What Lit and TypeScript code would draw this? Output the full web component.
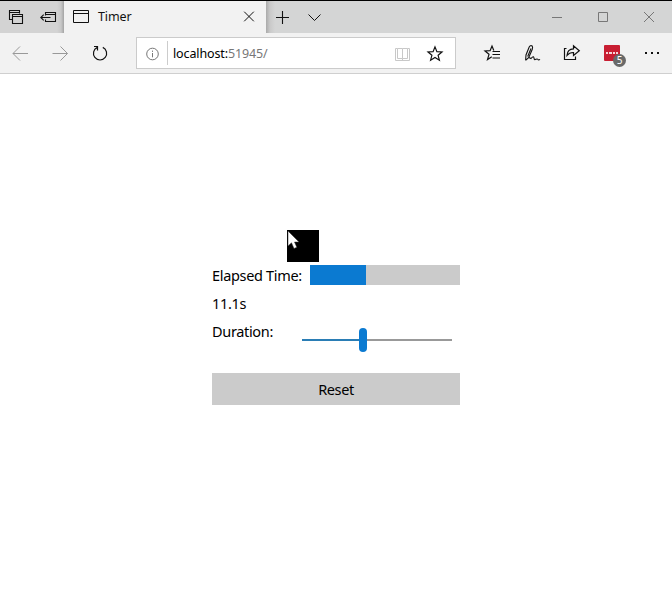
import { LitElement, html, css, svg } from "lit";
import { customElement, property, state } from "lit/decorators.js";
import { styleMap } from "lit/directives/style-map.js";

const icons = {
  tabs: svg`<path d="M12 19.5H9.5V10.5H19.5V13.5M9.5 12.5H19.5M12.5 14.5H22.5V23.5H12.5ZM12.5 16.5H22.5" stroke-width="1.1" />`,
  setAside: svg`<path d="M13.5 15.5V12.5H23.5V21.5H13.5V19.5M13.5 14.5H23.5M9 17.5H18.5M11.7 14.7L8.8 17.5L11.7 20.3" stroke-width="1.1" />`,
  page: svg`<path d="M9.5 10.5H24.5V22.5H9.5ZM9.5 13.5H24.5" />`,
  close: svg`<path d="M11.2 11.7L20.8 21.3M20.8 11.7L11.2 21.3" />`,
  plus: svg`<path d="M16.5 11V24M10 17.5H23" stroke-width="1.1" />`,
  chevron: svg`<path d="M10.5 14.5L16.5 20.5L22.5 14.5" />`,
  minimize: svg`<path d="M18 17.5H28" />`,
  maximize: svg`<path d="M18.5 12.5H27.5V21.5H18.5Z" />`,
  quit: svg`<path d="M18 12L28 22M28 12L18 22" />`,
  back: svg`<path d="M13 20.5H28M20 13.5L13 20.5L20 27.5" />`,
  forward: svg`<path d="M13 20.5H28M21 13.5L28 20.5L21 27.5" transform="translate(-.5 0)" />`,
  refresh: svg`<path d="M17.3 14.4A6.6 6.6 0 1 0 22.8 14.4M14 13.5H17.5V17.5" stroke-width="1.2" />`,
  info: svg`<circle cx="15.5" cy="16" r="5.8" /><path d="M15.5 15V19.3M15.5 12.6V13.9" />`,
  book: svg`<path d="M18.5 10.5H13.5V20.5H18.5V10.5H23.5V20.5H18.5M13.5 10.5H11.5V22.5H25.5V10.5H23.5M18.5 20.5V22.5" />`,
  star: svg`<path d="M17 8.9L18.9 13.7L24 14L20.1 17.3L21.4 22.2L17 19.5L12.6 22.2L13.9 17.3L10 14L15.1 13.7Z" stroke-width="1.2" />`,
  favorites: svg`<path d="M21.8 17.5L20 13L18.1 17.7L13 18L17 21.3L15.5 26.5L19.8 23.7M20.5 18.5H28M20.5 21.5H28M20.5 25H28" stroke-width="1.2" />`,
  pen: svg`<path d="M13.6 27.3L14 22L17.2 14Q18.4 11.8 20.2 13Q21 14 20.2 16.5L16.8 24.4L13.6 27.3M19 15.5L15.7 23.5M16.8 24.4L19 25.5C21.5 22.5 21.8 23.8 22.2 26C22.8 28 24.8 24.8 25.8 26.3Q26.5 27.5 28 26.4" stroke-width="1.1" />`,
  share: svg`<path d="M14.5 15.5H12.5V26.5H23.5V23.5M15 22.5Q15.3 16 21.5 15.8V12.7L27.3 17.7L21.5 22.5V19.5Q17.5 19.3 15 22.5Z" stroke-width="1.2" />`,
  more: svg`<path d="M13 20H15M19 20H21M25 20H27" stroke-width="1.8" />`,
};

@customElement("ui-icon")
class UiIcon extends LitElement {
  @property() name: keyof typeof icons = "page";
  @property({ type: Number }) w = 32;
  @property({ type: Number }) h = 32;
  static styles = css`
    :host { display: block; flex: none; }
    svg { display: block; fill: none; stroke: currentColor; stroke-width: 1; }
  `;
  render() {
    return html`<svg width=${this.w} height=${this.h} viewBox="0 0 ${this.w} ${this.h}">${icons[this.name]}</svg>`;
  }
}

@customElement("browser-chrome")
class BrowserChrome extends LitElement {
  static styles = css`
    :host { display: block; color: #111; }
    .titlebar { display: flex; height: 32px; border-top: 1px solid #000; background: #d4d5d5; }
    .left { display: flex; width: 64px; background: linear-gradient(90deg, #d3d3d3 57px, #c8c8c8 61px, #a4a4a4); }
    .tab { display: flex; width: 202px; background: #f2f2f2; }
    .name { flex: 1; font-size: 12.5px; line-height: 31px; letter-spacing: -0.1px; }
    .tail { flex: 1; display: flex; background: linear-gradient(90deg, #aaa, #c9c9c9 4px, #d4d5d5 9px); }
    .controls { display: flex; margin-left: auto; color: #777; }
    .titlebar ui-icon { margin-top: -1px; }
    .toolbar { display: flex; height: 40px; background: #f2f2f2; border-bottom: 1px solid #cfcfcf; }
    .dim { color: #999; }
    .address { box-sizing: border-box; display: flex; width: 320px; height: 32px; margin: 4px 16px 0; background: #fff; border: 1px solid #cbcbcb; }
    .rule { width: 1px; height: 24px; margin: 3px 5px 0 0; background: #ccc; }
    .url { flex: 1; font-size: 12.5px; line-height: 31px; letter-spacing: -0.13px; color: #777; }
    .host { color: #000; }
    .info { color: #777; }
    .book { color: #c8c8c8; }
    .ext { position: relative; width: 40px; height: 40px; }
    .tile { box-sizing: border-box; width: 16px; height: 16px; margin: 12px; padding: 7px 2px 0; display: flex; gap: 1px; border-radius: 1px; background: #c81e32; }
    .dot { width: 2.3px; height: 2px; background: #f6d5d9; }
    .badge { position: absolute; left: 21px; top: 21px; width: 13px; height: 13px; border-radius: 50%; background: #696969; color: #fff; font-size: 10px; line-height: 13px; text-align: center; }
  `;
  render() {
    return html`
      <div class="titlebar">
        <div class="left"><ui-icon name="tabs"></ui-icon><ui-icon name="setAside"></ui-icon></div>
        <div class="tab">
          <ui-icon name="page" w="34"></ui-icon>
          <div class="name">Timer</div>
          <ui-icon name="close" w="33"></ui-icon>
        </div>
        <div class="tail">
          <ui-icon name="plus"></ui-icon><ui-icon name="chevron"></ui-icon>
          <div class="controls">
            <ui-icon name="minimize" w="46"></ui-icon><ui-icon name="maximize" w="46"></ui-icon><ui-icon name="quit" w="46"></ui-icon>
          </div>
        </div>
      </div>
      <div class="toolbar">
        <ui-icon class="dim" name="back" w="40" h="40"></ui-icon>
        <ui-icon class="dim" name="forward" w="40" h="40"></ui-icon>
        <ui-icon name="refresh" w="40" h="40"></ui-icon>
        <div class="address">
          <ui-icon class="info" name="info" w="30" h="30"></ui-icon>
          <div class="rule"></div>
          <div class="url"><span class="host">localhost:</span>51945/</div>
          <ui-icon class="book" name="book" w="34" h="30"></ui-icon>
          <ui-icon name="star" w="37" h="30"></ui-icon>
        </div>
        <ui-icon name="favorites" w="40" h="40"></ui-icon>
        <ui-icon name="pen" w="40" h="40"></ui-icon>
        <ui-icon name="share" w="40" h="40"></ui-icon>
        <div class="ext">
          <div class="tile">${[1, 2, 3, 4].map(() => html`<div class="dot"></div>`)}</div>
          <div class="badge">5</div>
        </div>
        <ui-icon name="more" w="40" h="40"></ui-icon>
      </div>
    `;
  }
}

@customElement("app-root")
class AppRoot extends LitElement {
  @state() elapsed = 11.1;
  @state() fill = 56;
  @state() thumb = 57;
  static styles = css`
    :host { display: block; position: relative; width: 672px; height: 596px; overflow: hidden; background: #fff; color: #000; font-family: "Segoe UI", "Noto Sans", "Open Sans", sans-serif; }
    .timer { width: 248px; margin: 156px 0 0 212px; font-size: 14.5px; line-height: 28px; }
    .square { width: 32px; height: 32px; margin-left: 75px; background: #000; }
    .square svg { display: block; }
    .row { display: flex; justify-content: space-between; height: 28px; }
    .label { line-height: 26px; letter-spacing: -0.33px; white-space: nowrap; }
    .gauge { width: 150px; height: 20px; margin-top: 3px; background: #cbcbcb; }
    .fill { height: 20px; background: #0b7ad1; }
    .slider { display: flex; align-items: center; width: 150px; height: 24px; margin: 10px 8px 0 0; }
    .done { height: 2px; background: #2a7db5; }
    .thumb { width: 8px; height: 24px; border-radius: 4px; background: #0b7ad1; }
    .rest { flex: 1; height: 2px; background: #999; }
    .reset { display: block; width: 248px; height: 32px; margin-top: 27px; padding: 0; border: 0; background: #cbcbcb; color: #000; font: inherit; line-height: 32px; letter-spacing: -0.4px; }
  `;
  render() {
    return html`
      <browser-chrome></browser-chrome>
      <div class="timer">
        <div class="square">
          <svg width="32" height="32" viewBox="0 0 32 32"><path d="M1 1V16L4.5 12.8L7 18.5L9.8 17.3L7.5 12H12Z" fill="#fff" stroke="#333" stroke-width=".5" /></svg>
        </div>
        <div class="row">
          <div class="label">Elapsed Time:</div>
          <div class="gauge"><div class="fill" style=${styleMap({ width: `${this.fill}px` })}></div></div>
        </div>
        <div class="row"><div class="label">${this.elapsed}s</div></div>
        <div class="row">
          <div class="label">Duration:</div>
          <div class="slider">
            <div class="done" style=${styleMap({ width: `${this.thumb}px` })}></div>
            <div class="thumb"></div>
            <div class="rest"></div>
          </div>
        </div>
        <button class="reset">Reset</button>
      </div>
    `;
  }
}
